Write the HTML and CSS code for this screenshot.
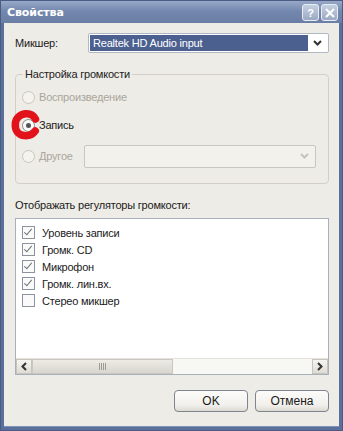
FILE: index.html
```html
<!DOCTYPE html>
<html lang="ru">
<head>
    <meta charset="UTF-8">
    <title>Свойства</title>
    <link rel="stylesheet" href="styles.css">
</head>
<body>
    <div class="window">
        <div class="titlebar">
            <span class="title">Свойства</span>
            <div class="caption-buttons">
                <span class="cap-btn">?</span>
                <span class="cap-btn cap-close">
                    <svg width="10" height="10" viewBox="0 0 10 10"><path d="M1 1L9 9M9 1L1 9" stroke="#fff" stroke-width="2"/></svg>
                </span>
            </div>
        </div>
        <div class="client">
            <div class="mixer-row">
                <span class="mixer-label">Микшер:</span>
                <div class="combo">
                    <span class="combo-value">Realtek HD Audio input</span>
                    <span class="combo-arrow">
                        <svg width="9" height="6" viewBox="0 0 9 6"><path d="M1 1L4.5 4.5L8 1" fill="none" stroke="#333" stroke-width="2"/></svg>
                    </span>
                </div>
            </div>

            <fieldset class="group">
                <legend>Настройка громкости</legend>
                <div class="radio-row disabled">
                    <span class="radio"></span>
                    <span>Воспроизведение</span>
                </div>
                <div class="radio-row checked">
                    <span class="radio"><span class="dot"></span></span>
                    <span>Запись</span>
                    <svg class="scribble" width="36" height="36" viewBox="0 0 36 36">
                        <path d="M29.5 12C27 7.5 23 6.5 19.5 6.8C13 7.5 9.5 12 9.3 17.5C9 23 12 28 18.5 28.6C23 29 27 27 29.2 24" fill="none" stroke="#e2121b" stroke-width="7.5" stroke-linecap="round"/>
                    </svg>
                </div>
                <div class="radio-row disabled">
                    <span class="radio"></span>
                    <span class="other-label">Другое</span>
                    <div class="combo combo-disabled">
                        <span class="combo-value"></span>
                        <span class="combo-arrow">
                            <svg width="9" height="6" viewBox="0 0 9 6"><path d="M1 1L4.5 4.5L8 1" fill="none" stroke="#c4c4bc" stroke-width="2"/></svg>
                        </span>
                    </div>
                </div>
            </fieldset>

            <div class="list-label">Отображать регуляторы громкости:</div>
            <div class="listbox">
                <div class="list-items">
                    <div class="check-row"><span class="check on"></span>Уровень записи</div>
                    <div class="check-row"><span class="check on"></span>Громк. CD</div>
                    <div class="check-row"><span class="check on"></span>Микрофон</div>
                    <div class="check-row"><span class="check on"></span>Громк. лин.вх.</div>
                    <div class="check-row"><span class="check"></span>Стерео микшер</div>
                </div>
                <div class="hscroll">
                    <span class="sb-btn">
                        <svg width="6" height="9" viewBox="0 0 6 9"><path d="M5 1L1.5 4.5L5 8" fill="none" stroke="#333" stroke-width="2"/></svg>
                    </span>
                    <span class="sb-thumb"><span class="grip"></span></span>
                    <span class="sb-track"></span>
                    <span class="sb-btn">
                        <svg width="6" height="9" viewBox="0 0 6 9"><path d="M1 1L4.5 4.5L1 8" fill="none" stroke="#333" stroke-width="2"/></svg>
                    </span>
                </div>
            </div>

            <div class="buttons">
                <button class="btn">OK</button>
                <button class="btn">Отмена</button>
            </div>
        </div>
    </div>
</body>
</html>
```

FILE: styles.css
```css
body {
    margin: 0;
    font-family: "Liberation Sans", Arial, sans-serif;
    font-size: 11px;
    letter-spacing: -0.2px;
    color: #1a1a1a;
    background: #fff;
}
.window {
    width: 343px;
    height: 431px;
    box-sizing: border-box;
    display: flex;
    flex-direction: column;
    background: #5a6f99;
    border: 1px solid #4a5c84;
}
.titlebar {
    height: 22px;
    display: flex;
    align-items: center;
    justify-content: space-between;
    padding: 0 4px 0 6px;
    background: linear-gradient(#98a9c8, #7488ae 45%, #6a7ea6);
}
.title {
    color: #fff;
    font-family: "DejaVu Sans", sans-serif;
    font-weight: bold;
    font-size: 11px;
    letter-spacing: -0.1px;
}
.caption-buttons {
    display: flex;
    gap: 2px;
    margin-top: 1px;
}
.cap-btn {
    width: 15px;
    height: 15px;
    display: flex;
    align-items: center;
    justify-content: center;
    border: 1px solid #e8ecf4;
    border-radius: 3px;
    background: linear-gradient(#c5cfe0, #9aa9c4);
    color: #fff;
    font-size: 11px;
    font-weight: bold;
}
.client {
    flex: 1;
    margin: 0 3px 3px 3px;
    background: #eeece6;
    border-bottom: 1px solid #7f93b8;
    padding: 10px 8px 0 11px;
    display: flex;
    flex-direction: column;
}
.mixer-row {
    display: flex;
    align-items: center;
    height: 20px;
}
.mixer-label {
    width: 73px;
}
.combo {
    width: 241px;
    height: 20px;
    box-sizing: border-box;
    display: flex;
    border: 1px solid #b0b8c4;
    border-radius: 2px;
    background: #fff;
    padding: 1px;
}
.combo-value {
    flex: 1;
    background: #4c6090;
    color: #fff;
    padding-left: 3px;
    line-height: 16px;
}
.combo-arrow {
    width: 19px;
    display: flex;
    align-items: center;
    justify-content: center;
}
.group {
    margin: 15px 2px 0 0;
    padding: 6px 0 0 6px;
    height: 116px;
    box-sizing: border-box;
    border: 1px solid #d2d0c6;
    border-radius: 4px;
}
.group legend {
    padding: 0 2px;
    margin-left: 1px;
    color: #222;
}
.radio-row {
    display: flex;
    align-items: center;
    height: 22px;
    margin-bottom: 6px;
    position: relative;
}
.radio-row.checked {
    margin-bottom: 9px;
}
.radio-row.disabled {
    color: #a8a69c;
}
.radio {
    width: 13px;
    height: 13px;
    box-sizing: border-box;
    border: 1px solid #c8c6bc;
    border-radius: 50%;
    background: #f4f3ee;
    margin-right: 4px;
    display: flex;
    align-items: center;
    justify-content: center;
}
.checked .radio {
    border-color: #8d8d88;
    background: #fafaf8;
}
.dot {
    width: 5px;
    height: 5px;
    border-radius: 50%;
    background: #555;
}
.scribble {
    position: absolute;
    left: -16px;
    top: -7px;
}
.other-label {
    width: 45px;
}
.combo-disabled {
    width: 232px;
    height: 23px;
    border-color: #c8c8c0;
    background: #f2f1ec;
}
.combo-disabled .combo-value {
    background: none;
}
.list-label {
    margin-top: 15px;
    height: 14px;
}
.listbox {
    margin-top: 5px;
    margin-right: 2px;
    height: 157px;
    box-sizing: border-box;
    border: 1px solid #a7b0bb;
    background: #fff;
    display: flex;
    flex-direction: column;
}
.list-items {
    flex: 1;
    padding: 5px 0 0 6px;
}
.check-row {
    display: flex;
    align-items: center;
    height: 17px;
}
.check {
    width: 13px;
    height: 13px;
    box-sizing: border-box;
    border: 1px solid #8b939e;
    background: #fafafa;
    margin-right: 7px;
    position: relative;
}
.check.on::after {
    content: "";
    position: absolute;
    left: 3px;
    top: 0px;
    width: 3px;
    height: 7px;
    border: solid #6a7474;
    border-width: 0 1.5px 1.5px 0;
    transform: rotate(40deg);
}
.hscroll {
    height: 15px;
    display: flex;
    border-top: 1px solid #e4e2da;
}
.sb-btn {
    width: 16px;
    display: flex;
    align-items: center;
    justify-content: center;
    background: linear-gradient(#f6f5f0, #dedcd4);
    border: 1px solid #c6c4bb;
    box-sizing: border-box;
}
.sb-thumb {
    width: 141px;
    display: flex;
    align-items: center;
    justify-content: center;
    background: linear-gradient(#ecebe5, #d8d6ce);
    border: 1px solid #c9c7bf;
    box-sizing: border-box;
}
.grip {
    width: 7px;
    height: 7px;
    background: repeating-linear-gradient(90deg, #9c9a92 0 1px, transparent 1px 2px);
}
.sb-track {
    flex: 1;
    background: #f7f7f4;
}
.buttons {
    display: flex;
    justify-content: flex-end;
    gap: 7px;
    margin-top: 15px;
    margin-right: 2px;
}
.btn {
    width: 74px;
    height: 22px;
    font-family: "Liberation Sans", Arial, sans-serif;
    font-size: 12px;
    color: #1a1a1a;
    border: 1px solid #7e8590;
    border-radius: 4px;
    background: linear-gradient(#fcfcfa, #f1f0ec 70%, #dcdad2);
    padding: 0;
}
```
